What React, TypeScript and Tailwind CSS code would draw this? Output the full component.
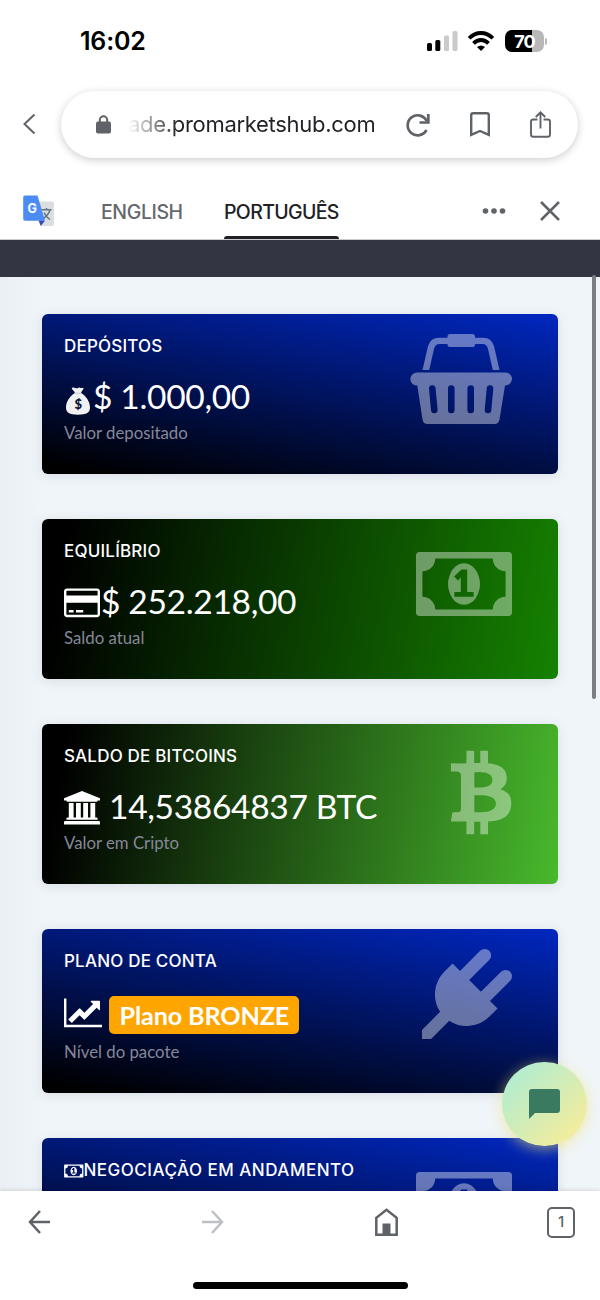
import React from "react";

interface IconProps {
  className?: string;
}

interface StatCardProps {
  title: React.ReactNode;
  background: string;
  height: string;
  icon: React.ReactNode;
  children?: React.ReactNode;
  caption?: string;
}

const MoneyIcon: React.FC<IconProps> = ({ className }) => (
  <svg viewBox="0 0 1920 1792" fill="currentColor" className={className}>
    <path d="M768 1152h384v-96h-128v-448h-114l-148 137 77 80q42-37 55-57h2v288h-128v96zm512-256q0 70-21 142t-59.5 134-101.5 101-138 39-138-39-101.5-101-59.5-134-21-142 21-142 59.5-134 101.5-101 138-39 138 39 101.5 101 59.5 134 21 142zm512 256v-512q-106 0-181-75t-75-181h-1152q0 106-75 181t-181 75v512q106 0 181 75t75 181h1152q0-106 75-181t181-75zm128-832v1152q0 26-19 45t-45 19h-1792q-26 0-45-19t-19-45v-1152q0-26 19-45t45-19h1792q26 0 45 19t19 45z" />
  </svg>
);

const BitcoinIcon: React.FC<IconProps> = ({ className }) => (
  <svg viewBox="0 0 1792 1792" fill="currentColor" className={className}>
    <path d="M1408 566q18 182-131 258 117 28 175 103t45 214q-7 71-32.5 125t-64.5 89-97 58.5-121.5 34.5-145.5 15v255h-154v-251q-80 0-122-1v252h-154v-255q-18 0-54-.5t-55-.5h-200l31-183h111q50 0 58-51v-402h16q-6-1-16-1v-287q-13-68-89-68h-111v-164l212 1q64 0 97-1v-252h154v247q82-2 122-2v-245h154v252q79 7 140 22.5t113 45 82.5 78 36.5 114.5zm-215 545q0-36-15-64t-37-46-57.5-30.5-65.5-18.5-74-9-69-3-64.5 1-47.5 1v338q8 0 37 .5t48 .5 53-1.5 58.5-4 57-8.5 55.5-14 47.5-21 39.5-30 24.5-40 9.5-51zm-71-476q0-33-12.5-58.5t-30.5-42-48-28-55-16.5-61.5-8-58-2.5-54 1-39.5.5v307q5 0 34.5.5t46.5 0 50-2 55-5.5 51.5-11 48.5-18.5 37-27 27-38.5 9-51z" />
  </svg>
);

const PlugIcon: React.FC<IconProps> = ({ className }) => (
  <svg viewBox="0 0 1792 1792" fill="currentColor" className={className}>
    <path d="M1755 453q37 38 37 90.5t-37 90.5l-401 400 150 150-160 160q-163 163-389.5 186.5t-411.5-100.5l-362 362h-181v-181l362-362q-124-185-100.5-411.5t186.5-389.5l160-160 150 150 400-401q38-37 91-37t90 37 37 90.5-37 90.5l-400 401 234 234 401-400q38-37 91-37t90 37z" />
  </svg>
);

const BasketIcon: React.FC<IconProps> = ({ className }) => (
  <svg viewBox="0 0 102 90" className={className}>
    <mask id="slots">
      <rect width="102" height="90" fill="white" />
      <path
        d="M22.3 54.5 24.3 76M41.3 54.5V76M60.7 54.5V76M80 54.5 78 76"
        stroke="black"
        strokeWidth="6.6"
        strokeLinecap="round"
      />
    </mask>
    <g fill="currentColor" mask="url(#slots)">
      <path d="M6.5 38.5h89a6.5 6.5 0 0 1 0 13l-.5 0L89.5 85.5q-.8 4.5-5 4.5h-67q-4.2 0-5-4.5L7.3 51.5A6.5 6.5 0 0 1 6.5 38.5z" />
      <path d="M40 0h22.500q2.500 0 2.500 2.500V3.700H73q8.500 0 11 8.300l5.500 24h-6.700L78 15q-1.200-5-5.500-5H65v.5q0 2.500-2.500 2.500H40q-2.500 0-2.500-2.500V10h-8q-4.300 0-5.500 5l-4.800 21h-6.700L18 12q2.500-8.300 11-8.300h8.500V2.500Q37.500 0 40 0z" />
    </g>
  </svg>
);

const CreditCardIcon: React.FC<IconProps> = ({ className }) => (
  <svg viewBox="0 0 1920 1792" fill="currentColor" className={className}>
    <path d="M1760 128q66 0 113 47t47 113v1216q0 66-47 113t-113 47h-1600q-66 0-113-47t-47-113v-1216q0-66 47-113t113-47h1600zm-1600 128q-13 0-22.5 9.5t-9.5 22.5v224h1664v-224q0-13-9.5-22.5t-22.5-9.5h-1600zm1600 1280q13 0 22.5-9.5t9.5-22.5v-608h-1664v608q0 13 9.5 22.5t22.5 9.5h1600zm-1504-128v-128h256v128h-256zm384 0v-128h384v128h-384z" />
  </svg>
);

const BankIcon: React.FC<IconProps> = ({ className }) => (
  <svg viewBox="0 0 1920 1792" fill="currentColor" className={className}>
    <path d="M960 0l960 384v128h-128q0 26-20.5 45t-48.5 19h-1526q-28 0-48.5-19t-20.5-45h-128v-128zm-704 640h256v768h128v-768h256v768h128v-768h256v768h128v-768h256v768h59q28 0 48.5 19t20.5 45v64h-1664v-64q0-26 20.5-45t48.5-19h59v-768zm1595 960q28 0 48.5 19t20.5 45v128h-1920v-128q0-26 20.5-45t48.5-19h1782z" />
  </svg>
);

const ChartIcon: React.FC<IconProps> = ({ className }) => (
  <svg viewBox="0 0 2048 1792" fill="currentColor" className={className}>
    <path d="M2048 1536v128h-2048v-1536h128v1408h1920zm-128-1248v435q0 21-19.5 29.5t-35.5-7.5l-121-121-633 633q-10 10-23 10t-23-10l-233-233-416 416-192-192 585-585q10-10 23-10t23 10l233 233 464-464-121-121q-16-16-7.5-35.5t29.5-19.5h435q14 0 23 9t9 23z" />
  </svg>
);

const MoneyBagIcon: React.FC<IconProps> = ({ className }) => (
  <svg viewBox="0 0 24 28" className={className}>
    <path
      d="M6.2.7q1.600-.5 3 .3 1.300.7 2.700 0t2.800-.1q1.200.5 2.300-.2.900.2.400 1.300L15.300 5q-.3.8.2 1.300C20.500 9.500 24 15 24 20.500c0 5-3.300 7.200-12 7.200S0 25.500 0 20.500C0 15 3.500 9.500 8.500 6.300q.5-.5.1-1.300L6 2q-.5-1 .2-1.300z"
      fill="#f1f1f3"
    />
    <path d="M8.500 6.300h7" stroke="#b9bcc8" strokeWidth=".8" />
    <text
      x="12"
      y="21.800"
      textAnchor="middle"
      fontFamily="Lato, sans-serif"
      fontWeight="900"
      fontSize="13"
      fill="#0b1437"
    >
      $
    </text>
  </svg>
);

const TranslateIcon: React.FC<IconProps> = ({ className }) => (
  <svg viewBox="0 0 32 32" className={className}>
    <path d="M14 6.500h15q2 0 2 2V29q0 2-2 2H18z" fill="#dcdde0" />
    <path
      d="M18.500 14.800h10M23.500 13v1.800M27 15q-1.500 5-7 8.800M21 17.500q1.500 4 6 7"
      fill="none"
      stroke="#60777f"
      strokeWidth="1.500"
    />
    <path d="M15.500 25.500h6.500L17.800 31z" fill="#3347b5" />
    <path d="M2 .5h12.500L22 25.700H2q-1.800 0-1.800-1.800V2.300Q.2.500 2 .5z" fill="#4c8bf5" />
    <text
      x="9.300"
      y="18"
      textAnchor="middle"
      fontFamily="Inter, sans-serif"
      fontWeight="700"
      fontSize="12.500"
      fill="#fff"
    >
      G
    </text>
  </svg>
);

const StatusBar = () => (
  <div className="flex h-20 items-center justify-between pl-[80px] pr-[53px] pt-[2px] text-black">
    <span className="pt-[2px] text-[25px] font-semibold tracking-[-0.2px]">16:02</span>
    <div className="flex items-center">
      <svg viewBox="0 0 31 20" className="mr-[10px] h-5 w-[31px]">
        <rect x="0" y="12" width="5" height="8" rx="1.500" />
        <rect x="8.300" y="9" width="5" height="11" rx="1.500" />
        <rect x="17" y="4.500" width="5" height="15.500" rx="1.500" fill="#cacaca" />
        <rect x="25.500" y="0" width="5" height="20" rx="1.500" fill="#cacaca" />
      </svg>
      <svg viewBox="0 0 26 20" className="mr-[11px] h-5 w-[26px]">
        <g fill="none" stroke="#000" strokeWidth="3.800">
          <path d="M1.200 7.300Q6 2 13 2t11.800 5.300" />
          <path d="M5.500 12.300Q8.800 9 13 9t7.500 3.300" />
        </g>
        <path d="M9 16q4-3 8 0L13 20z" />
      </svg>
      <div className="flex h-[22px] w-[39px] items-center justify-center rounded-[7px] bg-[linear-gradient(90deg,#000_70%,#b8b8b8_70%)] text-[18px] font-bold tracking-[-0.8px] text-white">
        70
      </div>
      <div className="ml-[1px] h-[7px] w-[2px] rounded-r-full bg-[#b8b8b8]" />
    </div>
  </div>
);

const AddressBar = () => (
  <div className="flex h-[90px] pt-[11px] text-[#5f6368]">
    <svg viewBox="0 0 14 22" className="ml-[22px] mt-[22px] h-[22px] w-[14px] shrink-0" fill="none" stroke="currentColor" strokeWidth="2">
      <path d="M12.500 1.500 2.500 11l10 9.500" />
    </svg>
    <div className="ml-[25px] flex h-[67px] w-[517px] items-center rounded-full bg-white pl-[35px] shadow-[0_2px_9px_rgba(0,0,0,0.2)]">
      <svg viewBox="0 0 15 19" className="h-[19px] w-[15px]">
        <path d="M3.800 8V5a3.700 3.700 0 0 1 7.400 0v3" fill="none" stroke="currentColor" strokeWidth="2" />
        <rect x="0" y="6.500" width="15" height="12" rx="2" fill="currentColor" />
      </svg>
      <span className="ml-[17px] w-[246px] whitespace-nowrap bg-[linear-gradient(90deg,#fff_0,#202124_50px)] bg-clip-text text-[22px] tracking-[-0.3px] text-transparent">
        ade.promarketshub.com
      </span>
      <svg viewBox="0 0 24 24" className="ml-[32px] h-6 w-6" fill="none" stroke="currentColor" strokeWidth="2.700">
        <path d="M20.500 17a10 10 0 1 1 .2-9" />
        <path d="M22.300 1v8.500H13.500" />
      </svg>
      <svg viewBox="0 0 20 25" className="ml-[40px] h-[25px] w-5" fill="none" stroke="currentColor" strokeWidth="2.400">
        <path d="M1.200 22.800V3q0-1.800 1.800-1.800h14q1.800 0 1.800 1.800v19.800L10 19z" />
      </svg>
      <svg viewBox="0 0 21 27" className="ml-[40px] h-[27px] w-[21px]" fill="none" stroke="currentColor" strokeWidth="1.900">
        <path d="M7.500 8.500H3.300q-2.300 0-2.300 2.300V23.500q0 2.300 2.300 2.300h14.400q2.300 0 2.300-2.300V10.800q0-2.300-2.300-2.300h-4.200M10.500 17.500V1.500M5.800 6l4.700-4.700L15.200 6" />
      </svg>
    </div>
  </div>
);

const TranslateBar = () => (
  <div className="flex h-[70px] border-b border-[#c9cbcf] pl-[23px] text-[19.5px] font-medium text-[#65686c]">
    <TranslateIcon className="mt-[25px] h-8 w-8" />
    <span className="ml-[46px] mt-[27px] w-[82px] whitespace-nowrap leading-[30px] tracking-[-0.4px]">ENGLISH</span>
    <div className="ml-[41px] flex w-[115px] flex-col justify-between whitespace-nowrap pt-[27px] leading-[30px] tracking-[-0.65px] text-[#202124]">
      PORTUGUÊS
      <div className="h-[3px] rounded-t-full bg-[#202124]" />
    </div>
    <svg viewBox="0 0 24 6" className="ml-[143px] mt-[38px] h-[6px] w-6" fill="#5f6368">
      <circle cx="3.500" cy="3" r="2.800" />
      <circle cx="12" cy="3" r="2.800" />
      <circle cx="20.500" cy="3" r="2.800" />
    </svg>
    <svg viewBox="0 0 20 20" className="ml-[34px] mt-[31px] h-5 w-5" stroke="#5f6368" strokeWidth="2.500">
      <path d="m1 1 18 18M19 1 1 19" />
    </svg>
  </div>
);

const StatCard: React.FC<StatCardProps> = ({ title, background, height, icon, children, caption }) => (
  <div
    className={`flex shrink-0 justify-between rounded-[6px] pl-[22px] pr-[46px] shadow-[0_2px_12px_rgba(60,70,100,0.13)] ${background} ${height}`}
  >
    <div className="flex flex-col whitespace-nowrap pt-[23.5px] text-white">
      <h3 className="flex h-5 items-center text-[17px] font-medium tracking-[0.2px]">{title}</h3>
      {children}
      {caption && (
        <p className="font-[Lato] text-[16.8px] leading-5 text-[#86879a]">{caption}</p>
      )}
    </div>
    <div className="text-white/40">{icon}</div>
  </div>
);

const StatValue: React.FC<{ children: React.ReactNode }> = ({ children }) => (
  <div className="mt-[16.5px] flex h-[49px] items-center font-[Lato] text-[33.6px] tracking-[-0.35px]">
    {children}
  </div>
);

const BLUE = "bg-[linear-gradient(10deg,#000_4%,#0027c0_100%)]";

const App: React.FC = () => {
  return (
    <div className="relative flex h-[1300px] w-[600px] flex-col overflow-hidden bg-white font-[Inter,sans-serif]">
      <StatusBar />
      <AddressBar />
      <TranslateBar />
      <div className="h-[37px] shrink-0 bg-[#333642]" />

      <main className="flex h-[914px] shrink-0 flex-col gap-[45px] overflow-hidden bg-[linear-gradient(90deg,#e9eff2,#f0f5f9_45px)] px-[42px] pt-[36.5px]">
        <StatCard
          title="DEPÓSITOS"
          background={BLUE}
          height="h-[160px]"
          icon={<BasketIcon className="mt-[20.5px] h-[90px] w-[102px]" />}
          caption="Valor depositado"
        >
          <StatValue>
            <MoneyBagIcon className="ml-[2px] mr-[3px] mt-[6px] h-7 w-6" />
            <span className="pb-[3px]">$ 1.000,00</span>
          </StatValue>
        </StatCard>

        <StatCard
          title="EQUILÍBRIO"
          background="bg-[linear-gradient(100deg,#000_5%,#158200_100%)]"
          height="h-[160px]"
          icon={<MoneyIcon className="mt-[20.4px] h-[90px] w-[96px]" />}
          caption="Saldo atual"
        >
          <StatValue>
            <CreditCardIcon className="mr-[1px] h-[33.6px] w-9" />
            <span className="pb-[3px]">$ 252.218,00</span>
          </StatValue>
        </StatCard>

        <StatCard
          title="SALDO DE BITCOINS"
          background="bg-[linear-gradient(100deg,#000_5%,#48b92c_100%)]"
          height="h-[160px]"
          icon={<BitcoinIcon className="-mr-[14px] mt-[24.5px] h-[90px] w-[90px]" />}
          caption="Valor em Cripto"
        >
          <StatValue>
            <BankIcon className="mr-[9px] h-[33.6px] w-9" />
            <span className="pb-[3px]">14,53864837 BTC</span>
          </StatValue>
        </StatCard>

        <StatCard
          title="PLANO DE CONTA"
          background={BLUE}
          height="h-[164px]"
          icon={<PlugIcon className="mt-[20.5px] h-[90px] w-[90px]" />}
          caption="Nível do pacote"
        >
          <div className="mb-[4px] mt-[16.5px] flex h-[49px] items-center font-[Lato]">
            <ChartIcon className="mr-[7px] h-[33.6px] w-[38.4px]" />
            <span className="mt-[4px] flex h-[38px] w-[190px] items-center justify-center rounded-[5px] bg-[#ffa500] pt-[1px] text-[25.2px] font-bold tracking-[-0.15px]">
              Plano BRONZE
            </span>
          </div>
        </StatCard>

        <StatCard
          title={
            <>
              <MoneyIcon className="h-[18px] w-[19.5px]" />
              <span className="tracking-[0.5px]">NEGOCIAÇÃO EM ANDAMENTO</span>
            </>
          }
          background={BLUE}
          height="h-[160px]"
          icon={<MoneyIcon className="mt-[21px] h-[90px] w-[96px]" />}
        />
      </main>

      <footer className="relative h-[109px] shrink-0 bg-white text-[#5f6368] shadow-[0_-1px_4px_rgba(0,0,0,0.12)]">
        <div className="flex h-[62px] items-center pl-[28px]">
          <svg viewBox="0 0 23 24" className="h-6 w-[23px]" fill="none" stroke="currentColor" strokeWidth="2.500">
            <path d="M22 12H2M12 1 2 12l10 11" />
          </svg>
          <svg viewBox="0 0 23 24" className="ml-[150px] h-6 w-[23px]" fill="none" stroke="#bdc1c6" strokeWidth="2.500">
            <path d="M1 12h20M11 1l10 11-10 11" />
          </svg>
          <svg viewBox="0 0 23 28" className="ml-[151px] h-7 w-[23px]">
            <path d="M1.300 26.700V9.800L11.500 1.800l10.200 8v16.900z" fill="none" stroke="currentColor" strokeWidth="2.500" />
            <path d="M7.500 15.500h8V27h-8z" fill="currentColor" />
          </svg>
          <span className="ml-[149px] flex h-[31px] w-7 items-center justify-center rounded-[5px] border-[2.5px] border-[#5f6368] text-[15px] font-medium">
            1
          </span>
        </div>
        <div className="mx-auto mt-[29px] h-[7px] w-[215px] rounded-full bg-black" />
      </footer>

      <div className="absolute right-[4px] top-[275px] h-[424px] w-[4px] rounded-full bg-[#7b7f83]" />

      <button className="absolute left-[502px] top-[1062px] flex h-[84px] w-[85px] items-center justify-center rounded-full bg-[linear-gradient(135deg,#abecd6_5%,#fbed96_95%)] shadow-[0_3px_14px_rgba(240,225,110,0.6)]">
        <svg viewBox="0 0 31 30" className="h-[30px] w-[31px]" fill="#397a61">
          <path d="M3 0h25q3 0 3 3v18q0 3-3 3H6l-6 6V3q0-3 3-3z" />
        </svg>
      </button>
    </div>
  );
};

export default App;
